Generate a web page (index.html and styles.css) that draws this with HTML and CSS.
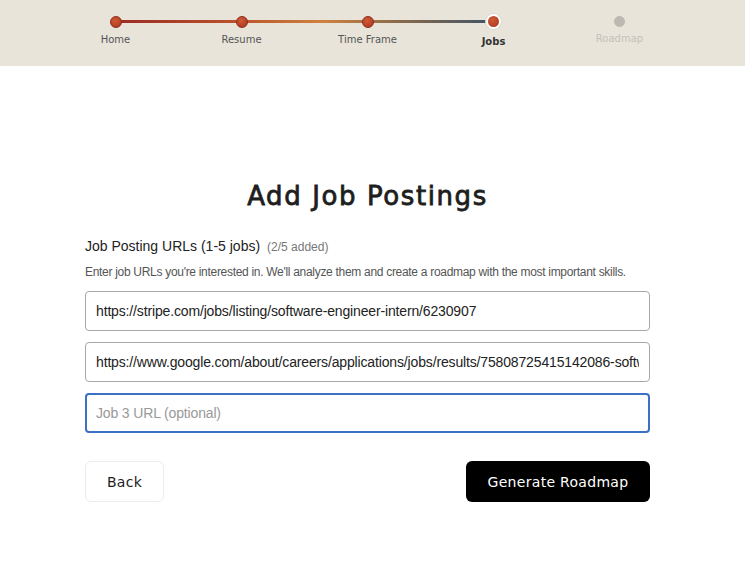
FILE: index.html
```html
<!DOCTYPE html>
<html lang="en">
<head>
  <meta charset="UTF-8" />
  <title>Add Job Postings</title>
  <meta name="viewport" content="width=device-width, initial-scale=1.0" />
  <link rel="stylesheet" href="styles.css">
</head>
<body>
  <header class="topbar">
    <div class="stepper">
      <div class="track"></div>
      <div class="step done"><span class="dot"></span><span class="label">Home</span></div>
      <div class="step done"><span class="dot"></span><span class="label">Resume</span></div>
      <div class="step done"><span class="dot"></span><span class="label">Time Frame</span></div>
      <div class="step active"><span class="dot"></span><span class="label">Jobs</span></div>
      <div class="step todo"><span class="dot"></span><span class="label">Roadmap</span></div>
    </div>
  </header>

  <main class="page">
    <section class="form">
      <h1>Add Job Postings</h1>
      <div class="field-head">
        <span class="field-title">Job Posting URLs (1-5 jobs)</span>
        <span class="field-count">(2/5 added)</span>
      </div>
      <p class="hint">Enter job URLs you're interested in. We'll analyze them and create a roadmap with the most important skills.</p>

      <div class="inputs">
        <input type="text" value="https://stripe.com/jobs/listing/software-engineer-intern/6230907">
        <input type="text" value="https://www.google.com/about/careers/applications/jobs/results/75808725415142086-software-engineer-intern">
        <input type="text" class="focused" placeholder="Job 3 URL (optional)">
      </div>

      <div class="actions">
        <button class="btn-back">Back</button>
        <button class="btn-go">Generate Roadmap</button>
      </div>
    </section>
  </main>
</body>
</html>
```

FILE: styles.css
```css
* { box-sizing: border-box; }

body {
  margin: 0;
  background: #fff;
  font-family: 'Liberation Sans', Arial, sans-serif;
  color: #222;
}

.topbar {
  background: #e8e4da;
  height: 66px;
}

.stepper {
  width: 735px;
  display: flex;
  justify-content: center;
  position: relative;
}

.track {
  position: absolute;
  top: 20px;
  left: 115px;
  width: 378px;
  height: 3px;
  background: linear-gradient(to right, #9c2a25, #b8502a 30%, #cf8240 55%, #8a6a4a 75%, #3f5468);
}

.step {
  width: 126px;
  display: flex;
  flex-direction: column;
  align-items: center;
  font-family: 'DejaVu Sans', sans-serif;
  font-size: 10px;
  color: #555;
}

.dot {
  width: 12px;
  height: 12px;
  border-radius: 50%;
  margin-top: 16px;
  background: radial-gradient(circle at 40% 35%, #d05a34, #a8341f);
  border: 1px solid #8e2a1a;
  position: relative;
}

.label {
  margin-top: 6px;
}

.step.active .dot {
  width: 15px;
  height: 15px;
  margin-top: 14px;
  border: 2px solid #fff;
  box-shadow: 0 0 0 1px #e0d8cc;
}

.step.active .label {
  color: #333;
  font-weight: bold;
  margin-top: 7px;
}

.step.todo .dot {
  background: #bcb8b2;
  border-color: #bcb8b2;
  width: 11px;
  height: 11px;
}

.step.todo .label {
  color: #c5c1b9;
}

.page {
  width: 735px;
  display: flex;
  justify-content: center;
}

.form {
  width: 565px;
  padding-top: 115px;
}

h1 {
  font-family: 'DejaVu Sans', sans-serif;
  font-weight: normal;
  font-size: 26px;
  text-align: center;
  letter-spacing: 1.6px;
  color: #1e1e1e;
  margin: 0 0 27px;
  -webkit-text-stroke: 0.8px #1e1e1e;
}

.field-head {
  display: flex;
  align-items: baseline;
  gap: 7px;
}

.field-title {
  font-size: 14px;
  color: #222;
}

.field-count {
  font-size: 12px;
  color: #777;
}

.hint {
  font-size: 12px;
  letter-spacing: -0.3px;
  white-space: nowrap;
  color: #555;
  margin: 11px 0 12px;
}

.inputs {
  display: flex;
  flex-direction: column;
  gap: 11px;
}

input {
  width: 100%;
  height: 40px;
  padding: 0 10px;
  font-family: 'Liberation Sans', Arial, sans-serif;
  font-size: 14px;
  letter-spacing: -0.15px;
  color: #222;
  border: 1px solid #a8a8a8;
  border-radius: 4px;
  outline: none;
}

input.focused {
  border: 2px solid #3d6fc4;
  padding: 0 9px;
}

input::placeholder {
  color: #999;
}

.actions {
  display: flex;
  justify-content: space-between;
  margin-top: 28px;
}

button {
  height: 41px;
  border-radius: 6px;
  font-family: 'DejaVu Sans', sans-serif;
  font-size: 14px;
  letter-spacing: 0.3px;
  cursor: pointer;
}

.btn-back {
  width: 79px;
  background: #fff;
  border: 1px solid #ececec;
  color: #222;
}

.btn-go {
  width: 184px;
  background: #000;
  border: none;
  color: #fff;
}
```
